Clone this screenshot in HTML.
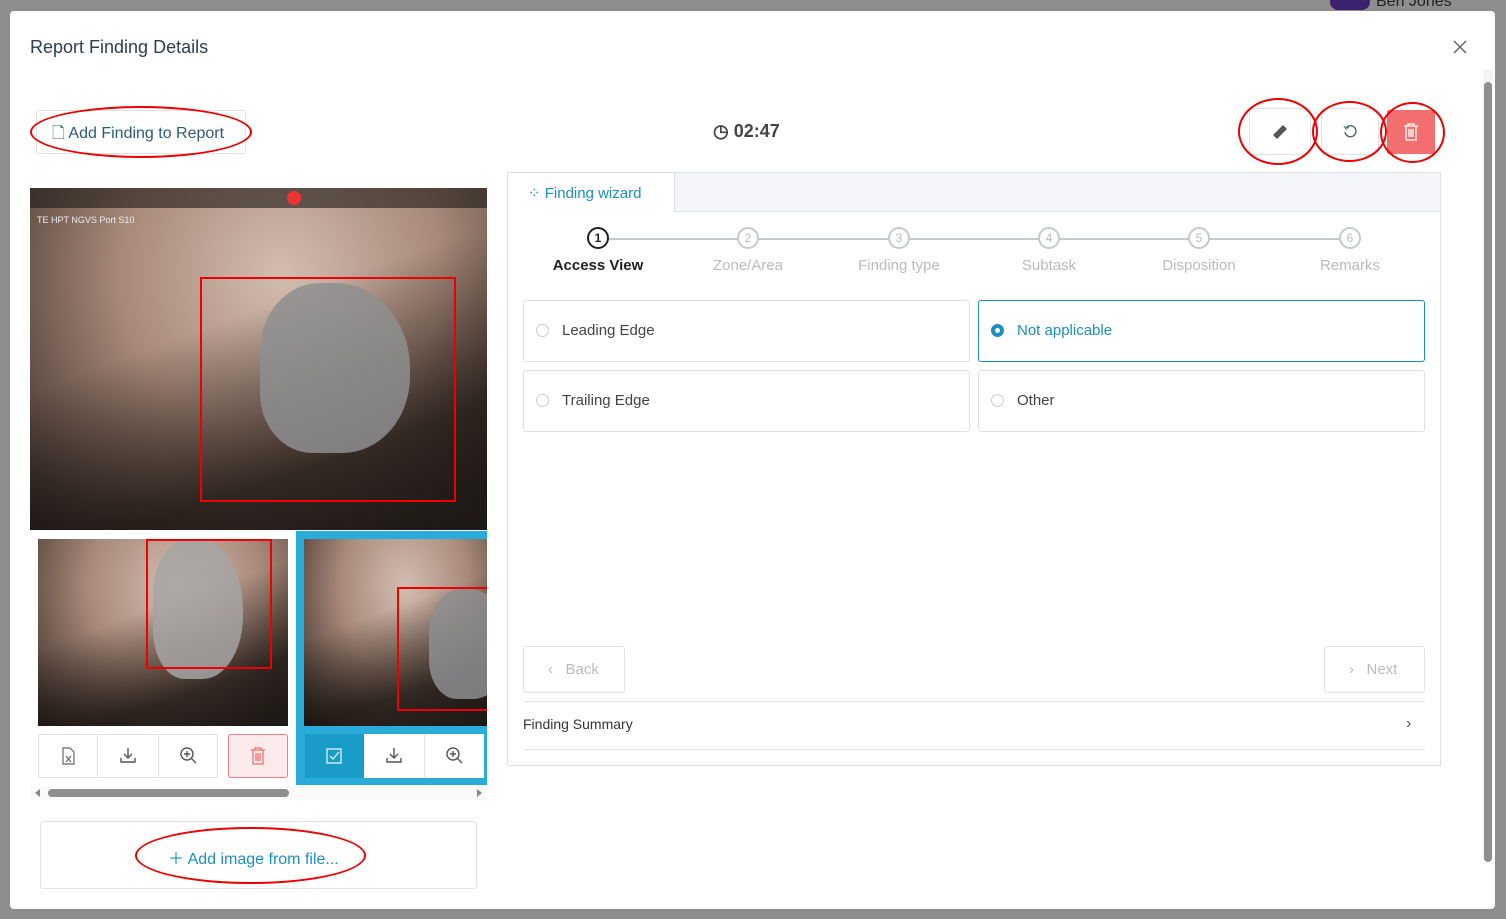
<!DOCTYPE html>
<html><head><style>
*{box-sizing:border-box;margin:0;padding:0}
body{width:1506px;height:919px;background:#8d8d8d;font-family:"Liberation Sans",sans-serif;position:relative;overflow:hidden;color:#333}
.a{position:absolute}
.modal{left:10px;top:11px;width:1485px;height:898px;background:#fff;border-radius:4px}
.btn{border:1px solid #e0e2e6;border-radius:3px;background:#fff}
.ell{border:2px solid #e00;border-radius:50%}
.img{background:linear-gradient(160deg,rgba(0,0,0,0) 40%,rgba(20,15,12,.75) 75%,#1e1a18 100%),radial-gradient(ellipse at 55% 25%,#d2bdb0 0%,#a88a7a 45%,#5a4840 80%,#2a2421 100%);overflow:hidden}
.blob{position:absolute;background:#8e8e90;border-radius:40% 50% 45% 35%;opacity:.85}
.step{width:150px;text-align:center;font-size:15px;color:#bbb}
.circ{width:22px;height:22px;border:2px solid #c6c9ce;border-radius:50%;margin:0 auto 8px;font-size:12px;line-height:18px;color:#bbb;background:#fff}
.opt{border:1px solid #dfe1e5;border-radius:3px;height:62px;font-size:15px;color:#444;padding:21px 0 0 38px}
.rad{left:12px;top:23px;width:13px;height:13px;border:1px solid #ccc;border-radius:50%}
svg{display:block}
</style></head><body>
<div class="a" style="left:1330px;top:0;width:40px;height:10px;background:#3a2270;border-radius:0 0 8px 8px"></div>
<div class="a" style="left:1376px;top:-7px;font-size:16px;color:#222">Ben Jones</div>
<div class="a modal"></div>
<div class="a" style="left:30px;top:37px;font-size:18px;color:#2c3e50">Report Finding Details</div>
<svg class="a" style="left:1453px;top:40px" width="14" height="14"><path d="M1 1L13 13M13 1L1 13" stroke="#666" stroke-width="1.5"/></svg>
<div class="a" style="left:1483px;top:70px;width:10px;height:790px;background:#f4f4f4"></div>
<div class="a" style="left:1484px;top:82px;width:8px;height:780px;background:#8e8e8e;border-radius:4px"></div>

<div class="a btn" style="left:36px;top:110px;width:210px;height:44px"></div>
<div class="a" style="left:52px;top:122px;font-size:16px;color:#2b5b78">🗋 Add Finding to Report</div>
<div class="a ell" style="left:30px;top:106px;width:222px;height:52px"></div>
<div class="a" style="left:713px;top:121px;font-size:18px;color:#444;font-weight:bold">◷ 02:47</div>

<div class="a btn" style="left:1249px;top:108px;width:62px;height:47px"></div>
<svg class="a" style="left:1271px;top:123px" width="18" height="18"><path d="M2 12L12 2L16 6L6 16Z" fill="#555"/></svg>
<div class="a btn" style="left:1321px;top:108px;width:58px;height:47px"></div>
<svg class="a" style="left:1343px;top:124px" width="14" height="14"><path d="M3 4A5.5 5.5 0 1 1 2 8" stroke="#555" stroke-width="1.3" fill="none"/><path d="M1 2L3 5L6 3" stroke="#4a90c0" stroke-width="1.3" fill="none"/></svg>
<div class="a" style="left:1387px;top:110px;width:48px;height:44px;background:#f36f6f;border-radius:2px"></div>
<svg class="a" style="left:1403px;top:123px" width="16" height="18"><path d="M1 3H15M5 3V1H11V3M3 3V17H13V3M6 6V14M8 6V14M10 6V14" stroke="#fff" stroke-width="1.3" fill="none"/></svg>
<div class="a ell" style="left:1238px;top:98px;width:80px;height:67px"></div>
<div class="a ell" style="left:1312px;top:101px;width:75px;height:61px"></div>
<div class="a ell" style="left:1380px;top:102px;width:65px;height:61px"></div>

<div class="a img" style="left:30px;top:188px;width:457px;height:342px"><div class="blob" style="left:230px;top:95px;width:150px;height:170px"></div><div class="a" style="left:0;top:0;width:457px;height:20px;background:rgba(30,25,22,.6)"></div></div>
<div class="a" style="left:37px;top:215px;font-size:9px;color:#eee">TE HPT NGVS Port S10</div>
<div class="a" style="left:287px;top:191px;width:14px;height:14px;border-radius:50%;background:#e33"></div>
<div class="a" style="left:200px;top:277px;width:256px;height:225px;border:2px solid #e00"></div>

<div class="a img" style="left:38px;top:539px;width:250px;height:187px"><div class="blob" style="left:115px;top:0;width:90px;height:140px;background:#a6a4a4"></div></div>
<div class="a" style="left:146px;top:539px;width:126px;height:130px;border:2px solid #e00"></div>
<div class="a" style="left:296px;top:531px;width:191px;height:254px;background:#29acd9"></div>
<div class="a img" style="left:304px;top:539px;width:183px;height:187px"><div class="blob" style="left:125px;top:50px;width:80px;height:110px"></div><div class="a" style="left:93px;top:48px;width:100px;height:124px;border:2px solid #e00"></div></div>

<div class="a btn" style="left:38px;top:734px;width:180px;height:44px"></div>
<div class="a" style="left:97px;top:734px;width:1px;height:44px;background:#e0e2e6"></div>
<div class="a" style="left:158px;top:734px;width:1px;height:44px;background:#e0e2e6"></div>
<svg class="a" style="left:60px;top:747px" width="16" height="18"><path d="M3 1H10L14 5V17H3Z" stroke="#666" fill="none" stroke-width="1.2"/><path d="M6 9L11 15M11 9L6 15" stroke="#666" stroke-width="1.2"/></svg>
<svg class="a" style="left:119px;top:746px" width="18" height="18"><path d="M9 2V12M5 8L9 12L13 8M2 12V16H16V12" stroke="#555" stroke-width="1.4" fill="none"/></svg>
<svg class="a" style="left:179px;top:746px" width="18" height="18"><circle cx="8" cy="8" r="6" stroke="#555" stroke-width="1.4" fill="none"/><path d="M8 5V11M5 8H11M12.5 12.5L17 17" stroke="#555" stroke-width="1.4"/></svg>
<div class="a" style="left:228px;top:734px;width:60px;height:44px;border:1px solid #f08080;background:#fdeaea;border-radius:3px"></div>
<svg class="a" style="left:250px;top:747px" width="16" height="18"><path d="M1 3H15M5 3V1H11V3M3 3V17H13V3M6 6V14M8 6V14M10 6V14" stroke="#f07070" stroke-width="1.3" fill="none"/></svg>
<div class="a" style="left:305px;top:734px;width:59px;height:44px;background:#1a9cc9"></div>
<svg class="a" style="left:325px;top:747px" width="18" height="18"><path d="M2 2H16V16H2Z" stroke="#cdeaf5" stroke-width="1.4" fill="none"/><path d="M5 9L8 12L14 5" stroke="#cdeaf5" stroke-width="1.4" fill="none"/></svg>
<div class="a" style="left:364px;top:734px;width:120px;height:44px;background:#fff"></div>
<div class="a" style="left:424px;top:734px;width:1px;height:44px;background:#e0e2e6"></div>
<svg class="a" style="left:385px;top:746px" width="18" height="18"><path d="M9 2V12M5 8L9 12L13 8M2 12V16H16V12" stroke="#555" stroke-width="1.4" fill="none"/></svg>
<svg class="a" style="left:445px;top:746px" width="18" height="18"><circle cx="8" cy="8" r="6" stroke="#555" stroke-width="1.4" fill="none"/><path d="M8 5V11M5 8H11M12.5 12.5L17 17" stroke="#555" stroke-width="1.4"/></svg>
<div class="a" style="left:30px;top:786px;width:457px;height:14px;background:#fafafa"></div>
<div class="a" style="left:35px;top:789px;width:0;height:0;border:4px solid transparent;border-right:5px solid #888;border-left:0"></div>
<div class="a" style="left:477px;top:789px;width:0;height:0;border:4px solid transparent;border-left:5px solid #888;border-right:0"></div>
<div class="a" style="left:48px;top:789px;width:241px;height:8px;background:#8e8e8e;border-radius:4px"></div>

<div class="a btn" style="left:40px;top:821px;width:437px;height:68px"></div>
<div class="a" style="left:168px;top:845px;font-size:16px;color:#1a8fc0">＋ Add image from file...</div>
<div class="a ell" style="left:135px;top:827px;width:231px;height:57px"></div>

<div class="a" style="left:507px;top:172px;width:934px;height:594px;border:1px solid #dfe1e5;background:#fff"></div>
<div class="a" style="left:508px;top:173px;width:932px;height:39px;background:#f5f6fa;border-bottom:1px solid #dfe1e5"></div>
<div class="a" style="left:508px;top:173px;width:167px;height:40px;background:#fff;border-right:1px solid #dfe1e5"></div>
<div class="a" style="left:528px;top:184px;font-size:15px;color:#1a8fc0">⁘ Finding wizard</div>

<div class="a" style="left:598px;top:238px;width:752px;height:2px;background:#c6c9ce"></div>
<div class="a step" style="left:523px;top:227px;color:#222;font-weight:bold"><div class="circ" style="border-color:#222;color:#222">1</div>Access View</div>
<div class="a step" style="left:673px;top:227px"><div class="circ">2</div>Zone/Area</div>
<div class="a step" style="left:824px;top:227px"><div class="circ">3</div>Finding type</div>
<div class="a step" style="left:974px;top:227px"><div class="circ">4</div>Subtask</div>
<div class="a step" style="left:1124px;top:227px"><div class="circ">5</div>Disposition</div>
<div class="a step" style="left:1275px;top:227px"><div class="circ">6</div>Remarks</div>

<div class="a opt" style="left:523px;top:300px;width:447px"><div class="a rad"></div>Leading Edge</div>
<div class="a opt" style="left:978px;top:300px;width:447px;border-color:#1a8fc0;color:#1a8fc0"><div class="a rad" style="border:4px solid #1a8fc0"></div>Not applicable</div>
<div class="a opt" style="left:523px;top:370px;width:447px"><div class="a rad"></div>Trailing Edge</div>
<div class="a opt" style="left:978px;top:370px;width:447px"><div class="a rad"></div>Other</div>

<div class="a btn" style="left:523px;top:646px;width:102px;height:47px;color:#bbb;font-size:15px;padding:14px 0 0 24px">‹&nbsp;&nbsp; Back</div>
<div class="a btn" style="left:1324px;top:646px;width:101px;height:47px;color:#bbb;font-size:15px;padding:14px 0 0 24px">›&nbsp;&nbsp; Next</div>
<div class="a" style="left:523px;top:701px;width:902px;height:1px;background:#e3e3e3"></div>
<div class="a" style="left:523px;top:716px;font-size:14px;color:#333">Finding Summary</div>
<div class="a" style="left:1406px;top:715px;font-size:16px;color:#555">›</div>
<div class="a" style="left:523px;top:749px;width:902px;height:1px;background:#e3e3e3"></div>
</body></html>
